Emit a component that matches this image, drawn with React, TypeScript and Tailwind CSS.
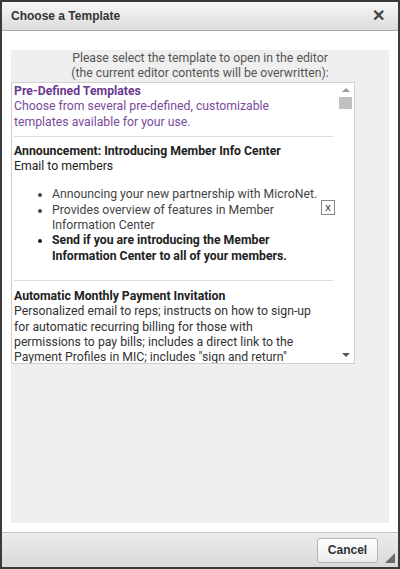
import React from "react";

const bullets = [
  { text: "Announcing your new partnership with MicroNet.", bold: false },
  { text: "Provides overview of features in Member Information Center", bold: false },
  { text: "Send if you are introducing the Member Information Center to all of your members.", bold: true },
];

const App: React.FC = () => {
  return (
    <div className="w-[400px] h-[569px] bg-[#3a3a3a] p-[2px] font-['Roboto',sans-serif]">
      <div className="flex flex-col h-full bg-white">
        {/* title bar */}
        <div className="flex items-center justify-between h-[29px] px-[9px] bg-gradient-to-b from-[#f7f7f7] to-[#dcdcdc] border-b border-[#a9a9a9]">
          <span className="text-[12px] text-[#333] font-['Liberation_Sans',sans-serif] font-bold">
            Choose a Template
          </span>
          <span className="text-[16px] leading-none font-bold text-[#444] mr-[4px]">✕</span>
        </div>

        {/* body */}
        <div className="flex-1 px-[9px] pt-[19px] pb-[9px]">
          <div className="h-full bg-[#efefef] flex flex-col">
            <p className="text-[12.25px] leading-[15px] text-[#555] text-center pt-[1px] pb-[1px]">
              Please select the template to open in the editor
              <br />
              (the current editor contents will be overwritten):
            </p>
            <div className="relative flex w-[344px] h-[282px] bg-white border border-[#cfcfcf] overflow-hidden">
              <div className="flex-1 pl-[2px] pr-[4px] pt-[1px] text-[12.25px] leading-[15.3px] text-[#222]">
                <div className="pb-[6px] border-b border-[#dcdcdc]">
                  <div className="pr-[13px]">
                    <div className="font-bold text-[#6b3a92]">Pre-Defined Templates</div>
                    <div className="text-[#7a4a9c]">
                      Choose from several pre-defined, customizable templates available for your use.
                    </div>
                  </div>
                </div>
                <div className="pt-[7px] pb-[16px] border-b border-[#dcdcdc]">
                  <div className="pr-[13px]">
                    <div className="font-bold">Announcement: Introducing Member Info Center</div>
                    <div>Email to members</div>
                    <ul className="mt-[13px] pl-[38px] list-disc">
                      {bullets.map((b) => (
                        <li key={b.text} className={b.bold ? "font-bold" : "text-[#444]"}>
                          {b.text}
                        </li>
                      ))}
                    </ul>
                  </div>
                </div>
                <div className="pt-[8px] pr-[13px]">
                  <div className="font-bold">Automatic Monthly Payment Invitation</div>
                  <div className="text-[#333]">
                    Personalized email to reps; instructs on how to sign-up for automatic recurring
                    billing for those with permissions to pay bills; includes a direct link to the
                    Payment Profiles in MIC; includes "sign and return"
                  </div>
                </div>
              </div>
              {/* scrollbar */}
              <div className="w-[17px] flex flex-col items-center bg-white">
                <span className="mt-[5px] w-0 h-0 border-l-[4px] border-r-[4px] border-b-[4px] border-l-transparent border-r-transparent border-b-[#9a9a9a]" />
                <span className="mt-[5px] w-[13px] h-[12px] bg-[#c1c1c1]" />
                <span className="mt-auto mb-[6px] w-0 h-0 border-l-[4px] border-r-[4px] border-t-[4px] border-l-transparent border-r-transparent border-t-[#555]" />
              </div>
              <span className="absolute left-[309px] top-[117px] w-[14px] h-[15px] border border-[#888] bg-white text-[11px] leading-[13px] text-center text-[#333] font-['Liberation_Sans',sans-serif]">
                x
              </span>
            </div>
          </div>
        </div>

        {/* footer */}
        <div className="relative flex items-center justify-end h-[35px] pr-[20px] bg-gradient-to-b from-[#ececec] to-[#d9d9d9] border-t border-[#c4c4c4]">
          <button className="w-[61px] h-[25px] rounded-[3px] border border-[#b5b5b5] bg-gradient-to-b from-white to-[#ececec] text-[12px] font-bold text-[#333] font-['Liberation_Sans',sans-serif]">
            Cancel
          </button>
          <span className="absolute right-[3px] bottom-[4px] w-0 h-0 border-l-[10px] border-b-[10px] border-l-transparent border-b-[#6a6a6a]" />
        </div>
      </div>
    </div>
  );
};

export default App;
